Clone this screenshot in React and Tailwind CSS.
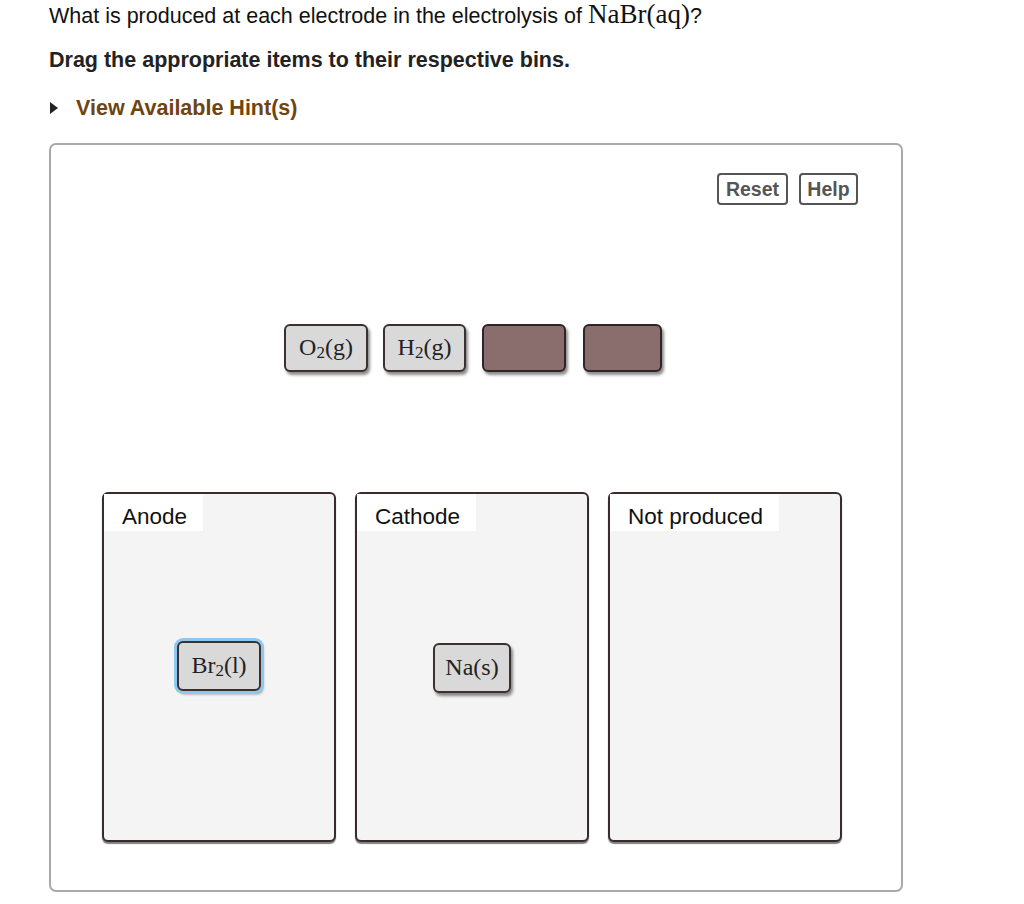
import React from "react";

const sans = { fontFamily: '"Liberation Sans", Arial, sans-serif' };
const serif = { fontFamily: '"Liberation Serif", "Times New Roman", serif' };

const Sub = ({ children }) => (
  <span className="relative top-[3px] text-[17px] leading-none">{children}</span>
);

const Token = ({ children, selected, className = "" }) => (
  <div
    className={`flex items-center justify-center rounded-[6px] border-2 border-[#3b2f2f] bg-[#d9d9d9] text-[24px] leading-none text-[#222] shadow-[2px_3px_3px_rgba(0,0,0,0.45)] ${
      selected ? "ring-[3px] ring-[#8cc8f0]" : ""
    } ${className}`}
    style={serif}
  >
    <span className="relative -top-[1px]">{children}</span>
  </div>
);

const Blank = ({ className = "" }) => (
  <div
    className={`rounded-[6px] border-2 border-[#2f2525] bg-[#8a6d6d] shadow-[2px_3px_3px_rgba(0,0,0,0.45)] ${className}`}
  />
);

const Bin = ({ label, children }) => (
  <div className="flex h-[350px] w-[234px] flex-col rounded-[6px] border-2 border-[#3a2c2c] bg-[#f4f4f4] shadow-[0_2px_1px_rgba(0,0,0,0.5)]">
    <div className="flex">
      <div className="bg-white pl-[18px] pr-[16px] pb-[1px] pt-[9px] text-[22.5px] leading-[27px] text-[#111]" style={sans}>
        {label}
      </div>
    </div>
    <div className="flex flex-1 justify-center pt-[110px]">{children}</div>
  </div>
);

export default function App() {
  return (
    <div className="min-h-[904px] w-[1024px] bg-white pl-[49px] pt-[1px]" style={sans}>
      <p className="text-[21.5px] leading-[28px] text-[#111]">
        What is produced at each electrode in the electrolysis of{" "}
        <span className="text-[27px] leading-none" style={serif}>
          NaBr(aq)
        </span>
        ?
      </p>
      <p className="mt-[17px] text-[21.5px] font-bold leading-[26px] text-[#222]">
        Drag the appropriate items to their respective bins.
      </p>
      <div className="mt-[22px] flex items-center text-[21.5px] font-bold leading-[26px] text-[#6e4410]">
        <svg width="10" height="14" viewBox="0 0 10 14" className="mr-[17px]">
          <path d="M1 1 L9 7 L1 13 Z" fill="#222" />
        </svg>
        View Available Hint(s)
      </div>

      <div className="mt-[22px] h-[749px] w-[854px] rounded-[7px] border-2 border-[#a9a9a9] pb-4">
        <div className="flex justify-end gap-[11px] pr-[43px] pt-[28px]">
          <button
            className="h-[32px] w-[71px] rounded-[4px] border-2 border-[#555] bg-white text-[19.5px] font-bold text-[#555]"
            style={sans}
          >
            Reset
          </button>
          <button
            className="h-[32px] w-[59px] rounded-[4px] border-2 border-[#555] bg-white text-[19.5px] font-bold text-[#555]"
            style={sans}
          >
            Help
          </button>
        </div>

        <div className="mt-[119px] flex pl-[233px]">
          <Token className="h-[48px] w-[84px]">
            O<Sub>2</Sub>(g)
          </Token>
          <Token className="ml-[15px] h-[48px] w-[83px]">
            H<Sub>2</Sub>(g)
          </Token>
          <Blank className="ml-[16px] h-[48px] w-[84px]" />
          <Blank className="ml-[17px] h-[48px] w-[79px]" />
        </div>

        <div className="mt-[120px] flex gap-[19px] pl-[51px]">
          <Bin label="Anode">
            <Token selected className="h-[50px] w-[84px]">
              Br<Sub>2</Sub>(l)
            </Token>
          </Bin>
          <Bin label="Cathode">
            <Token className="mt-[2px] h-[50px] w-[78px]">Na(s)</Token>
          </Bin>
          <Bin label="Not produced" />
        </div>
      </div>
    </div>
  );
}
